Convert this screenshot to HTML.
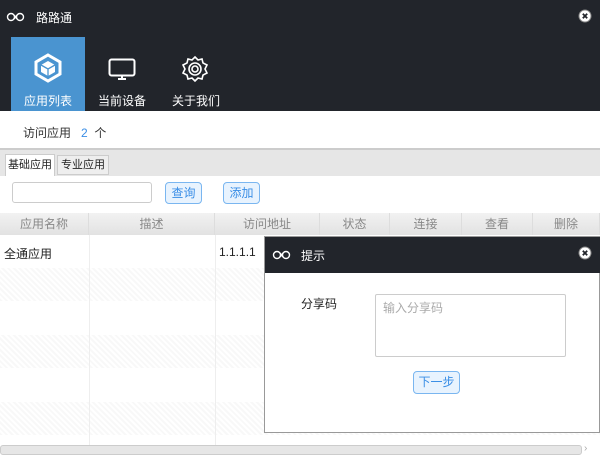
<!DOCTYPE html><html><head><meta charset="utf-8"><style>
*{margin:0;padding:0;box-sizing:border-box}
body{width:600px;height:459px;overflow:hidden;background:#fff;font-family:"Liberation Sans","Noto Sans CJK SC",sans-serif;font-size:12px;color:#222;position:relative}
.a{position:absolute}
.dark{background:#22252b}
.nav{color:#fff;font-size:12px;text-align:center;width:74px}
.hc{position:absolute;top:213px;height:22px;line-height:22px;text-align:center;color:#888;background:linear-gradient(#f2f2f2,#e2e2e2);border-right:1px solid #ddd}
.btn{position:absolute;height:22px;line-height:20px;border:1px solid #7ab6f0;border-radius:4px;background:#e8f3fe;color:#3a8ee6;text-align:center}
.stripe{position:absolute;left:0;width:600px;background:repeating-linear-gradient(45deg,#f8f8f8 0 2px,#fff 2px 4px)}
</style></head><body>
<div class="a dark" style="left:0;top:0;width:600px;height:111px"></div>
<svg class="a" style="left:6px;top:11px" width="20" height="12" viewBox="0 0 20 12"><g fill="none" stroke="#fff" stroke-width="1.4"><circle cx="5" cy="6" r="3.5"/><circle cx="14" cy="6" r="3.5"/><path d="M8 4l3 4M8 8l3-4"/></g></svg>
<div class="a" style="left:36px;top:9px;color:#fff;font-size:12px">路路通</div>
<svg class="a" style="left:578px;top:9px" width="14" height="14" viewBox="0 0 14 14"><circle cx="7" cy="7" r="6" fill="#fff"/><circle cx="7" cy="7" r="6" fill="none" stroke="#888" stroke-width="1"/><path d="M4.8 4.8l4.4 4.4M9.2 4.8l-4.4 4.4" stroke="#22252b" stroke-width="1.8"/></svg>
<div class="a" style="left:11px;top:37px;width:74px;height:74px;background:#4a94d0"></div>
<svg class="a" style="left:33px;top:53px" width="30" height="30" viewBox="0 0 30 30"><path d="M15 2l12 7v12l-12 7-12-7V9z" fill="none" stroke="#fff" stroke-width="3"/><path d="M15 8l7 4v7l-7 4-7-4v-7z" fill="#fff"/><path d="M8 12l7 4 7-4M15 16v7" stroke="#4a94d0" stroke-width="1.3" fill="none"/></svg>
<div class="a nav" style="left:11px;top:92px">应用列表</div>
<svg class="a" style="left:108px;top:58px" width="28" height="24" viewBox="0 0 28 24"><rect x="1.5" y="1.5" width="25" height="16" rx="2" fill="none" stroke="#fff" stroke-width="2"/><path d="M10 21h8M14 18v3" stroke="#fff" stroke-width="2"/></svg>
<div class="a nav" style="left:85px;top:92px">当前设备</div>
<svg class="a" style="left:181px;top:55px" width="28" height="28" viewBox="0 0 28 28"><path d="M14 2l3 3 4-1 1 4 4 2-2 4 2 4-4 2-1 4-4-1-3 3-3-3-4 1-1-4-4-2 2-4-2-4 4-2 1-4 4 1z" fill="none" stroke="#fff" stroke-width="1.6"/><circle cx="14" cy="14" r="6" fill="none" stroke="#fff" stroke-width="1.6"/><circle cx="14" cy="14" r="3" fill="none" stroke="#fff" stroke-width="1.6"/></svg>
<div class="a nav" style="left:159px;top:92px">关于我们</div>
<div class="a" style="left:23px;top:124px;color:#333">访问应用 &nbsp; <span style="color:#3a8ee6">2</span> &nbsp;个</div>
<div class="a" style="left:0;top:148px;width:600px;height:28px;background:#e6e6e6;border-top:2px solid #ccc"></div>
<div class="a" style="left:5px;top:154px;width:50px;height:22px;background:#fff;border:1px solid #ccc;border-bottom:none;line-height:20px;text-align:center;font-size:11px">基础应用</div>
<div class="a" style="left:57px;top:155px;width:52px;height:20px;background:#eee;border:1px solid #ccc;line-height:18px;text-align:center;font-size:11px">专业应用</div>
<div class="a" style="left:12px;top:182px;width:140px;height:21px;border:1px solid #ccc;border-radius:3px"></div>
<div class="btn" style="left:165px;top:182px;width:37px">查询</div>
<div class="btn" style="left:223px;top:182px;width:37px">添加</div>
<div class="hc" style="left:0;width:89px">应用名称</div>
<div class="hc" style="left:89px;width:126px">描述</div>
<div class="hc" style="left:215px;width:105px">访问地址</div>
<div class="hc" style="left:320px;width:70px">状态</div>
<div class="hc" style="left:390px;width:72px">连接</div>
<div class="hc" style="left:462px;width:71px">查看</div>
<div class="hc" style="left:533px;width:67px">删除</div>
<div class="a" style="left:4px;top:245px">全通应用</div>
<div class="a" style="left:219px;top:245px">1.1.1.1</div>
<div class="stripe" style="top:268px;height:33px"></div>
<div class="stripe" style="top:335px;height:33px"></div>
<div class="stripe" style="top:402px;height:33px"></div>
<div class="a" style="left:89px;top:235px;width:1px;height:210px;background:#eee"></div>
<div class="a" style="left:215px;top:235px;width:1px;height:210px;background:#eee"></div>
<div class="a" style="left:0;top:445px;width:582px;height:10px;background:#e6e6e6;border:1px solid #ccc;border-radius:3px"></div>
<div class="a" style="left:584px;top:443px;color:#aaa;font-size:10px">›</div>
<div class="a" style="left:264px;top:236px;width:336px;height:197px;background:#fff;border:1px solid #999"></div>
<div class="a dark" style="left:265px;top:237px;width:335px;height:36px"></div>
<svg class="a" style="left:272px;top:249px" width="20" height="12" viewBox="0 0 20 12"><g fill="none" stroke="#fff" stroke-width="1.4"><circle cx="5" cy="6" r="3.5"/><circle cx="14" cy="6" r="3.5"/><path d="M8 4l3 4M8 8l3-4"/></g></svg>
<div class="a" style="left:301px;top:247px;color:#fff">提示</div>
<svg class="a" style="left:578px;top:246px" width="14" height="14" viewBox="0 0 14 14"><circle cx="7" cy="7" r="6" fill="#fff"/><circle cx="7" cy="7" r="6" fill="none" stroke="#888" stroke-width="1"/><path d="M4.8 4.8l4.4 4.4M9.2 4.8l-4.4 4.4" stroke="#22252b" stroke-width="1.8"/></svg>
<div class="a" style="left:301px;top:295px">分享码</div>
<div class="a" style="left:375px;top:294px;width:191px;height:63px;border:1px solid #ccc;border-radius:2px;color:#aaa;padding:4px 7px">输入分享码</div>
<div class="btn" style="left:413px;top:371px;width:47px;height:23px">下一步</div>
</body></html>
